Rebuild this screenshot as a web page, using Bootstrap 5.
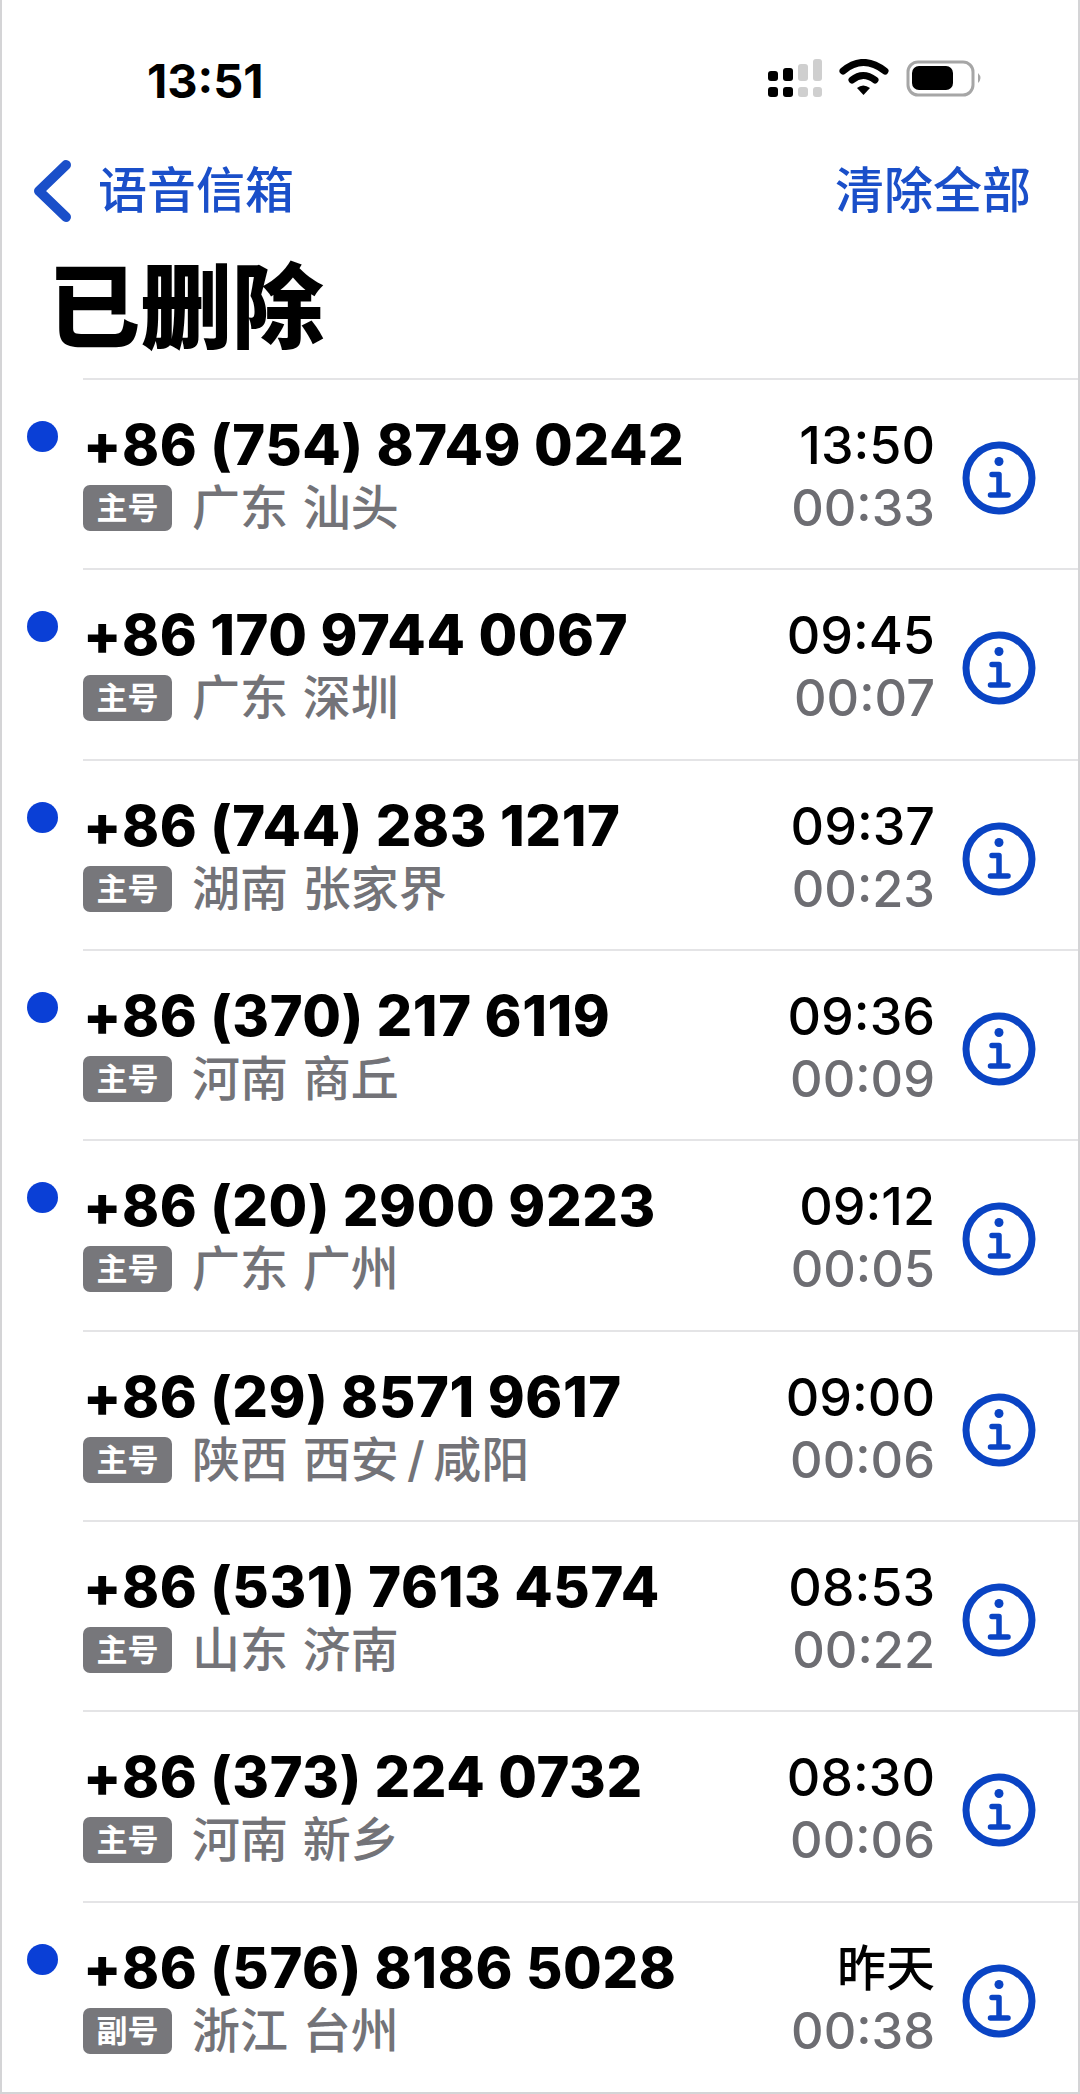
<!DOCTYPE html>
<html lang="zh-CN">
<head>
<meta charset="UTF-8">
<title>已删除</title>
<link href="https://cdn.jsdelivr.net/npm/bootstrap@5.3.3/dist/css/bootstrap.min.css" rel="stylesheet">
<style>
body { background: #fff; font-family: Inter, "Noto Sans CJK SC", sans-serif; color: #000; }
.phone-frame { width: 1080px; height: 2094px; overflow: hidden; border-left: 2px solid #d4d4d6; border-right: 2px solid #d4d4d6; border-bottom: 2px solid #d4d4d6; position: relative; }
.status-area { height: 151px; padding: 59px 94px 0 145px; }
.clock { font-size: 47px; line-height: 44px; font-weight: 700; }
.nav-area { height: 80px; padding: 0 47px 0 30px; color: #1a4fc9; font-size: 49px; font-weight: 500; line-height: 80px; }
.back-ico { margin-right: 26px; }
.page-title { font-size: 92px; line-height: 100px; font-weight: 900; margin: 27px 0 10px 46px; height: 110px; }
.vm-row { height: 190.33px; position: relative; padding: 36px 0 0 81px; }
.vm-row::before { content: ""; position: absolute; left: 81px; right: 0; top: 0; border-top: 2px solid #e4e4e6; }
.unread-dot { position: absolute; left: 25px; top: 43px; width: 31px; height: 31px; border-radius: 50%; background: #0a3fd6; }
.vm-number { font-size: 56px; line-height: 62px; font-weight: 800; letter-spacing: .6px; white-space: nowrap; }
.vm-sub { margin-top: 9px; height: 46px; }
.sim-tag { width: 89px; height: 46px; border-radius: 7px; background: #77777b; color: #fff; font-size: 31px; font-weight: 700; line-height: 46px; text-align: center; }
.vm-place { color: #737378; font-size: 48px; font-weight: 500; line-height: 46px; margin-left: 20px; word-spacing: 2px; white-space: nowrap; }
.vm-meta { width: 210px; text-align: right; margin-right: 27px; margin-top: 1px; }
.vm-time { font-size: 52px; line-height: 62px; font-weight: 500; }
.vm-time-word { font-size: 49px; }
.vm-len { font-size: 50.500px; line-height: 62px; color: #6d6d72; font-weight: 500; }
.info-ico { width: 74px; height: 74px; margin-top: 27px; margin-right: 42px; flex: none; }
.wm-patch { position: absolute; left: 912px; top: 2052px; width: 158px; height: 32px; background: #fff; opacity: .75; filter: blur(3px); }
</style>
</head>
<body class="m-0">
<svg width="0" height="0" class="d-block">
  <symbol id="info" viewBox="0 0 74 74">
    <circle cx="37" cy="37" r="33" fill="none" stroke="#0a44c4" stroke-width="7"/>
    <circle cx="37" cy="20.500" r="4.500" fill="#0a44c4"/>
    <path d="M30 33.500 H37 V54 M28.500 54 H46" fill="none" stroke="#0a44c4" stroke-width="5.500" stroke-linecap="round" stroke-linejoin="round"/>
  </symbol>
</svg>
<div class="phone-frame">
  <div class="status-area d-flex justify-content-between align-items-start">
    <div class="clock">13:51</div>
    <svg width="218" height="40" viewBox="764 60 218 40">
      <g fill="#000"><rect x="766" y="72" width="10" height="10" rx="3"/><rect x="781" y="69" width="10" height="13" rx="3"/><rect x="766" y="88" width="10" height="10" rx="3"/><rect x="781" y="88" width="10" height="10" rx="3"/></g>
      <g fill="#cfcfcf"><rect x="796" y="65" width="10" height="17" rx="3"/><rect x="811" y="60" width="9" height="22" rx="3"/><rect x="796" y="88" width="10" height="10" rx="3"/><rect x="811" y="88" width="9" height="10" rx="3"/></g>
      <path d="M841 72 Q861 55 883 72" fill="none" stroke="#000" stroke-width="7" stroke-linecap="round"/>
      <path d="M850 81 Q861 72 873 81" fill="none" stroke="#000" stroke-width="7" stroke-linecap="round"/>
      <path d="M855 89 Q861 84 868 89 L861.500 96Z" fill="#000"/>
      <rect x="906" y="63" width="65" height="33" rx="10" fill="none" stroke="#a6a6a6" stroke-width="3"/>
      <rect x="910" y="67" width="41" height="24" rx="7" fill="#000"/>
      <path d="M976 74 Q981 79 976 84Z" fill="#a6a6a6"/>
    </svg>
  </div>
  <div class="nav-area d-flex justify-content-between align-items-center">
    <div class="d-flex align-items-center">
      <svg width="40" height="62" viewBox="0 0 40 62" class="back-ico"><path d="M34 5 L7 31 L34 57" fill="none" stroke="#1a4fc9" stroke-width="10" stroke-linecap="round" stroke-linejoin="round"/></svg>
      <span>语音信箱</span>
    </div>
    <span>清除全部</span>
  </div>
  <h1 class="page-title">已删除</h1>

  <div class="vm-row d-flex justify-content-between">
    <div class="unread-dot"></div>
    <div><div class="vm-number">+86 (754) 8749 0242</div><div class="vm-sub d-flex"><div class="sim-tag">主号</div><div class="vm-place">广东 汕头</div></div></div>
    <div class="d-flex"><div class="vm-meta"><div class="vm-time">13:50</div><div class="vm-len">00:33</div></div><svg class="info-ico"><use href="#info"/></svg></div>
  </div>
  <div class="vm-row d-flex justify-content-between">
    <div class="unread-dot"></div>
    <div><div class="vm-number">+86 170 9744 0067</div><div class="vm-sub d-flex"><div class="sim-tag">主号</div><div class="vm-place">广东 深圳</div></div></div>
    <div class="d-flex"><div class="vm-meta"><div class="vm-time">09:45</div><div class="vm-len">00:07</div></div><svg class="info-ico"><use href="#info"/></svg></div>
  </div>
  <div class="vm-row d-flex justify-content-between">
    <div class="unread-dot"></div>
    <div><div class="vm-number">+86 (744) 283 1217</div><div class="vm-sub d-flex"><div class="sim-tag">主号</div><div class="vm-place">湖南 张家界</div></div></div>
    <div class="d-flex"><div class="vm-meta"><div class="vm-time">09:37</div><div class="vm-len">00:23</div></div><svg class="info-ico"><use href="#info"/></svg></div>
  </div>
  <div class="vm-row d-flex justify-content-between">
    <div class="unread-dot"></div>
    <div><div class="vm-number">+86 (370) 217 6119</div><div class="vm-sub d-flex"><div class="sim-tag">主号</div><div class="vm-place">河南 商丘</div></div></div>
    <div class="d-flex"><div class="vm-meta"><div class="vm-time">09:36</div><div class="vm-len">00:09</div></div><svg class="info-ico"><use href="#info"/></svg></div>
  </div>
  <div class="vm-row d-flex justify-content-between">
    <div class="unread-dot"></div>
    <div><div class="vm-number">+86 (20) 2900 9223</div><div class="vm-sub d-flex"><div class="sim-tag">主号</div><div class="vm-place">广东 广州</div></div></div>
    <div class="d-flex"><div class="vm-meta"><div class="vm-time">09:12</div><div class="vm-len">00:05</div></div><svg class="info-ico"><use href="#info"/></svg></div>
  </div>
  <div class="vm-row d-flex justify-content-between">
    <div><div class="vm-number">+86 (29) 8571 9617</div><div class="vm-sub d-flex"><div class="sim-tag">主号</div><div class="vm-place">陕西 西安&thinsp;/&thinsp;咸阳</div></div></div>
    <div class="d-flex"><div class="vm-meta"><div class="vm-time">09:00</div><div class="vm-len">00:06</div></div><svg class="info-ico"><use href="#info"/></svg></div>
  </div>
  <div class="vm-row d-flex justify-content-between">
    <div><div class="vm-number">+86 (531) 7613 4574</div><div class="vm-sub d-flex"><div class="sim-tag">主号</div><div class="vm-place">山东 济南</div></div></div>
    <div class="d-flex"><div class="vm-meta"><div class="vm-time">08:53</div><div class="vm-len">00:22</div></div><svg class="info-ico"><use href="#info"/></svg></div>
  </div>
  <div class="vm-row d-flex justify-content-between">
    <div><div class="vm-number">+86 (373) 224 0732</div><div class="vm-sub d-flex"><div class="sim-tag">主号</div><div class="vm-place">河南 新乡</div></div></div>
    <div class="d-flex"><div class="vm-meta"><div class="vm-time">08:30</div><div class="vm-len">00:06</div></div><svg class="info-ico"><use href="#info"/></svg></div>
  </div>
  <div class="vm-row d-flex justify-content-between">
    <div class="unread-dot"></div>
    <div><div class="vm-number">+86 (576) 8186 5028</div><div class="vm-sub d-flex"><div class="sim-tag">副号</div><div class="vm-place">浙江 台州</div></div></div>
    <div class="d-flex"><div class="vm-meta"><div class="vm-time vm-time-word">昨天</div><div class="vm-len">00:38</div></div><svg class="info-ico"><use href="#info"/></svg></div>
  </div>
  <div class="wm-patch"></div>
</div>
<script src="https://cdn.jsdelivr.net/npm/bootstrap@5.3.3/dist/js/bootstrap.bundle.min.js"></script>
</body>
</html>
